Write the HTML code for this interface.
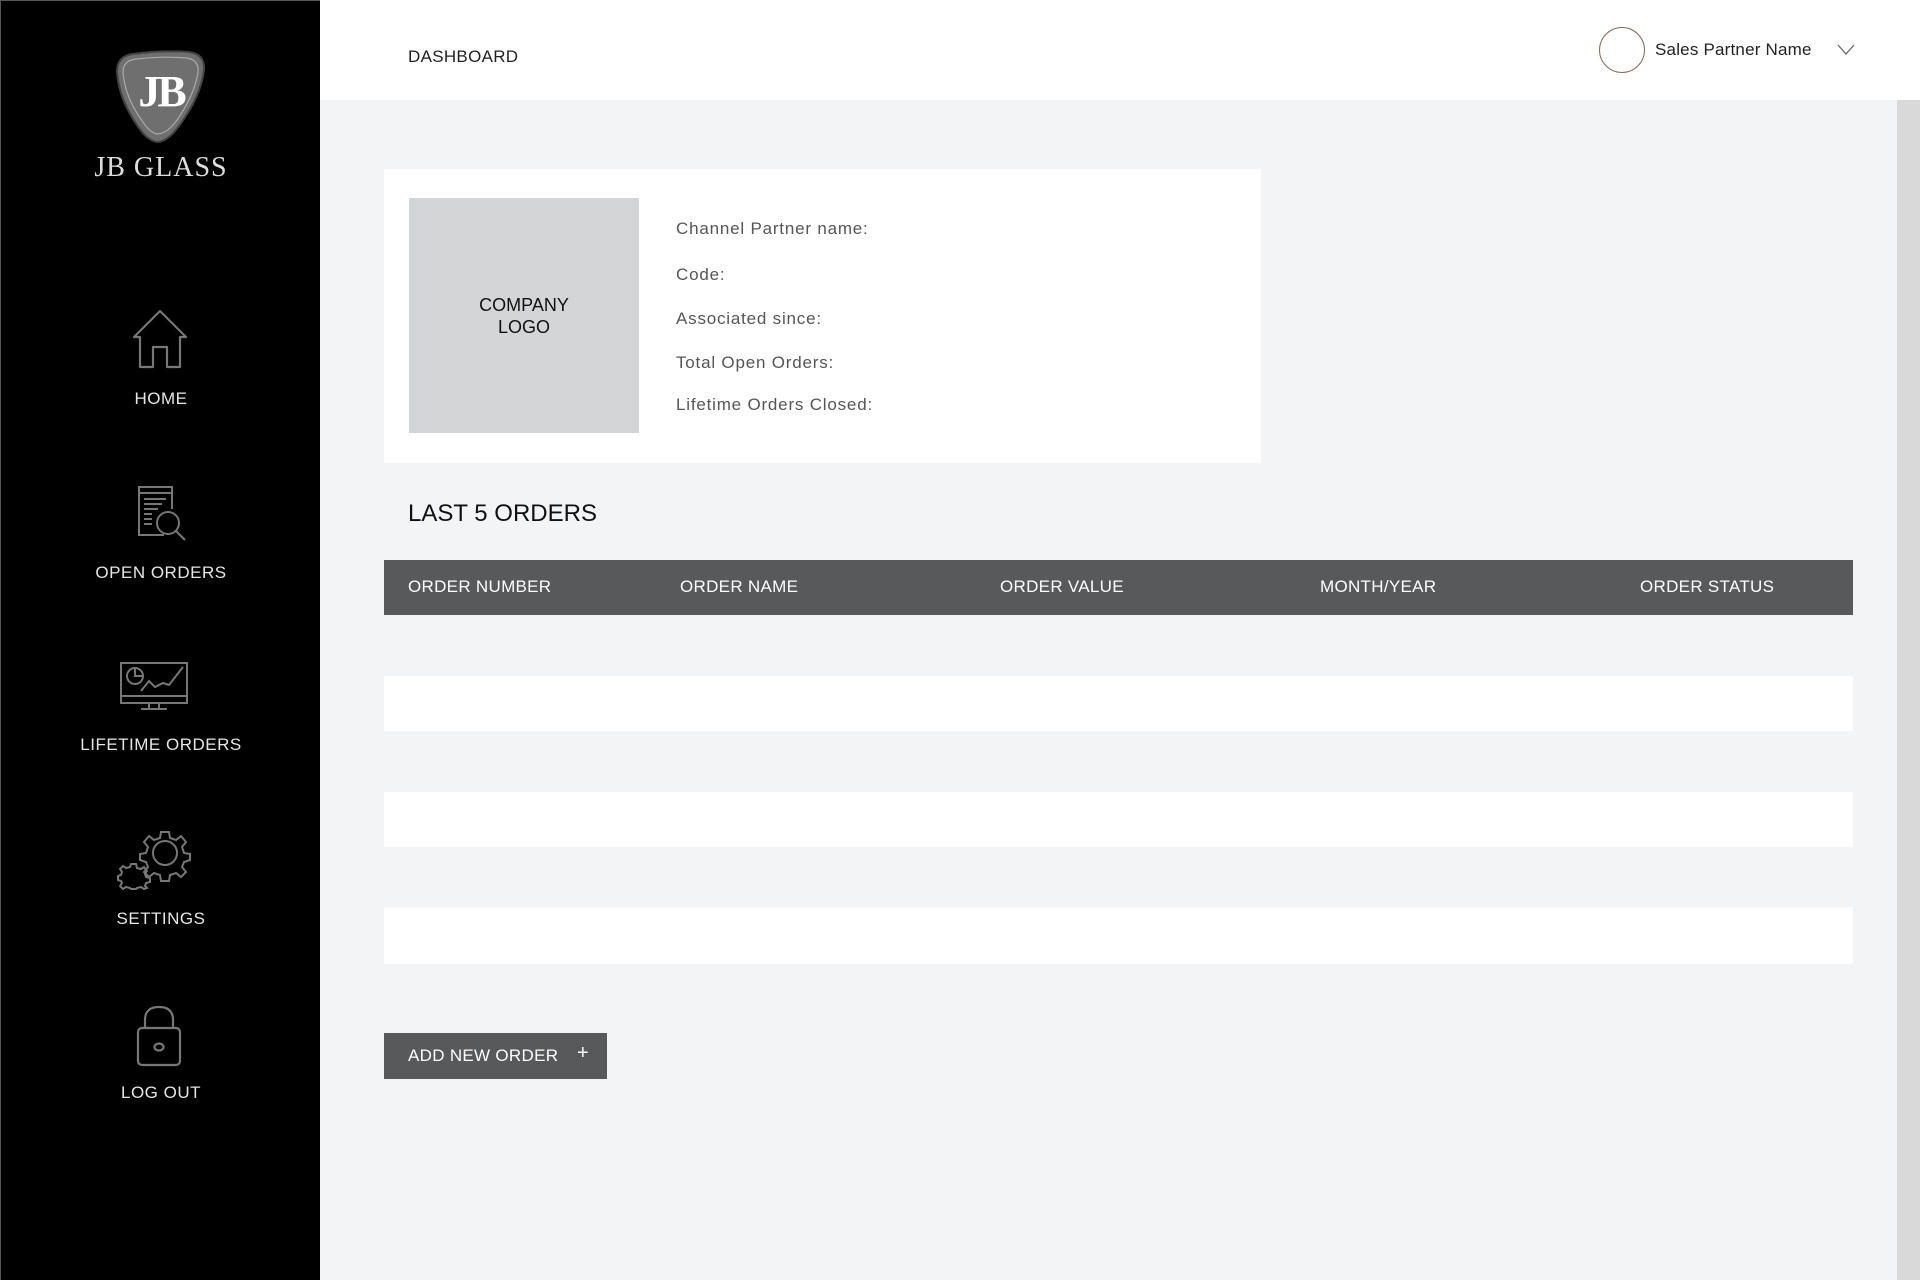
<!DOCTYPE html>
<html><head><meta charset="utf-8"><style>
*{margin:0;padding:0;box-sizing:border-box}
body{width:1920px;height:1280px;position:relative;background:#f3f4f5;font-family:"Liberation Sans",Arial,sans-serif;overflow:hidden}
.a{position:absolute}
#side{left:0;top:0;width:320px;height:1280px;background:#000;border-left:1px solid #555;border-top:1px solid #555}
.nl{position:absolute;left:0;width:320px;text-align:center;color:#e6e6e6;font-size:17px;line-height:20px;letter-spacing:.5px}
#top{left:320px;top:0;width:1600px;height:100px;background:#fff}
.lab{position:absolute;left:676px;color:#555;font-size:17px;line-height:20px;letter-spacing:.8px}
.th{position:absolute;top:577px;color:#fff;font-size:17px;line-height:20px;letter-spacing:.3px}
.row{position:absolute;left:384px;width:1469px;background:#fff}
</style></head><body>
<div id="side" class="a">
<svg class="a" style="left:110px;top:49px" width="98" height="96" viewBox="0 0 98 96">
<path d="M6 22 Q6 6 22 4 Q50 0 78 2 Q94 4 93 20 Q90 46 68 76 Q56 92 46 92 Q36 90 28 78 Q8 50 6 22Z" fill="#6f6f6f" stroke="#444" stroke-width="2"/>
<path d="M12 22 Q12 10 26 9 Q50 6 76 8 Q88 10 87 22 Q84 44 66 70 Q56 84 46 84 Q38 82 32 72 Q14 48 12 22Z" fill="none" stroke="#aaa" stroke-width="1.2"/>
<text x="50" y="56" text-anchor="middle" font-family="Liberation Serif,serif" font-weight="bold" font-size="44" fill="#fff" letter-spacing="-3">JB</text>
</svg>
<div class="nl" style="top:152px;font-family:'Liberation Serif',serif;font-size:28px;line-height:30px;color:#ddd;letter-spacing:1px">JB GLASS</div>
<svg class="a" style="left:130px;top:308px" width="58" height="60" viewBox="0 0 58 60" fill="none" stroke="#777" stroke-width="2.2" stroke-linejoin="round">
<path d="M3 28 L29 2 L55 28 L49 28 L49 58 L36 58 L36 38 L22 38 L22 58 L9 58 L9 28 Z"/></svg>
<div class="nl" style="top:388px">HOME</div>
<svg class="a" style="left:135px;top:484px" width="52" height="60" viewBox="0 0 52 60" fill="none" stroke="#777" stroke-width="2">
<path d="M28 50 L3 50 L3 2 L36 2 L36 24"/><path d="M3 8 L36 8"/><path d="M8 14 L30 14 M8 19 L26 19 M8 24 L22 24 M8 29 L16 29 M8 34 L16 34 M8 39 L16 39"/>
<circle cx="32" cy="38" r="11"/><path d="M40 46 L49 55"/></svg>
<div class="nl" style="top:562px">OPEN ORDERS</div>
<svg class="a" style="left:118px;top:660px" width="70" height="52" viewBox="0 0 70 52" fill="none" stroke="#777" stroke-width="2">
<rect x="2" y="2" width="66" height="40"/><path d="M2 35 L68 35 M30 42 L30 47 M40 42 L40 47 M22 48 L48 48"/>
<circle cx="16" cy="15" r="8"/><path d="M16 7 L16 15 L24 15"/><path d="M22 30 L30 20 L36 26 L44 22 L50 24 L64 6"/></svg>
<div class="nl" style="top:734px">LIFETIME ORDERS</div>
<svg class="a" style="left:116px;top:827px" width="76" height="62" viewBox="0 0 76 62" fill="none" stroke="#777" stroke-width="2">
<circle cx="48" cy="25" r="12"/>
<path d="M44 4 L52 4 L53 10 L59 12 L64 8 L69 14 L65 19 L67 25 L73 26 L73 32 L67 34 L65 39 L69 44 L64 49 L59 45 L53 47 L52 53 L44 53 L43 47 L37 45 L32 49 L27 44 L31 39 L29 34 L23 32 L23 26 L29 25 L31 19 L27 14 L32 8 L37 12 L43 10 Z"/>
<path d="M14 36 L19 36 L20 40 L24 41 L27 39 L30 43 L28 46 L29 49 L33 50 L33 54 L29 55 L28 58 L30 60 L27 61 L24 59 L20 60 L19 61 L14 61 L13 60 L9 59 L6 61 L3 58 L5 55 L4 53 L1 52 L1 48 L4 47 L5 44 L3 41 L6 38 L9 40 L13 39 Z"/></svg>
<div class="nl" style="top:908px">SETTINGS</div>
<svg class="a" style="left:134px;top:1003px" width="48" height="64" viewBox="0 0 48 64" fill="none" stroke="#777" stroke-width="2.2">
<path d="M10 24 L10 16 Q10 3 24 3 Q38 3 38 16 L38 24"/><rect x="3" y="24" width="42" height="37" rx="4"/><ellipse cx="24" cy="43" rx="4.5" ry="3.5"/></svg>
<div class="nl" style="top:1082px">LOG OUT</div>
</div>
<div id="top" class="a">
<div class="a" style="left:88px;top:47px;font-size:17px;color:#222;letter-spacing:.3px">DASHBOARD</div>
<div class="a" style="left:1279px;top:27px;width:46px;height:46px;border:1.5px solid #8a6a5a;border-radius:50%"></div>
<div class="a" style="left:1335px;top:40px;font-size:17px;color:#222;letter-spacing:.2px">Sales Partner Name</div>
<svg class="a" style="left:1517px;top:44px" width="18" height="12" viewBox="0 0 18 12"><path d="M1 1 L9 10 L17 1" fill="none" stroke="#666" stroke-width="1.3"/></svg>
</div>
<div class="a" style="left:1897px;top:100px;width:23px;height:1180px;background:#d9d9d9"></div>
<div class="a" style="left:384px;top:169px;width:877px;height:294px;background:#fff"></div>
<div class="a" style="left:409px;top:198px;width:230px;height:235px;background:#d4d5d6;display:flex;align-items:center;justify-content:center;text-align:center;font-size:18px;line-height:22px;color:#111">COMPANY<br>LOGO</div>
<div class="lab" style="top:219px">Channel Partner name:</div>
<div class="lab" style="top:265px">Code:</div>
<div class="lab" style="top:309px">Associated since:</div>
<div class="lab" style="top:353px">Total Open Orders:</div>
<div class="lab" style="top:395px">Lifetime Orders Closed:</div>
<div class="a" style="left:408px;top:500px;font-size:24px;color:#111">LAST 5 ORDERS</div>
<div class="a" style="left:384px;top:560px;width:1469px;height:55px;background:#58595b"></div>
<div class="th" style="left:408px">ORDER NUMBER</div>
<div class="th" style="left:680px">ORDER NAME</div>
<div class="th" style="left:1000px">ORDER VALUE</div>
<div class="th" style="left:1320px">MONTH/YEAR</div>
<div class="th" style="left:1640px">ORDER STATUS</div>
<div class="row" style="top:676px;height:55px"></div>
<div class="row" style="top:792px;height:55px"></div>
<div class="row" style="top:907px;height:57px"></div>
<div class="a" style="left:384px;top:1033px;width:223px;height:46px;background:#58595b"></div>
<div class="a" style="left:408px;top:1046px;font-size:17px;color:#fff;letter-spacing:.3px">ADD NEW ORDER</div>
<div class="a" style="left:577px;top:1042px;font-size:20px;color:#fff">+</div>
</body></html>
